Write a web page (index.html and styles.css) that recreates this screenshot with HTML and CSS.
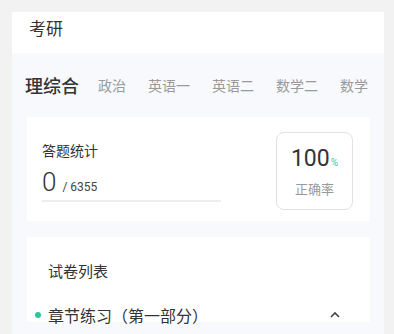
FILE: index.html
```html
<!DOCTYPE html>
<html lang="zh">
<head>
<meta charset="utf-8">
<link rel="stylesheet" href="styles.css">
</head>
<body>
<div class="panel">
  <div class="header">考研</div>
  <div class="body">
    <div class="tabs">
      <span class="tab active">理综合</span>
      <span class="tab">政治</span>
      <span class="tab">英语一</span>
      <span class="tab">英语二</span>
      <span class="tab">数学二</span>
      <span class="tab">数学</span>
    </div>
    <div class="card stats">
      <div class="stats-left">
        <div class="stats-title">答题统计</div>
        <div class="count"><span class="num">0</span><span class="total">/ 6355</span></div>
        <div class="bar"></div>
      </div>
      <div class="rate">
        <div class="rate-val">100<span class="pct">%</span></div>
        <div class="rate-label">正确率</div>
      </div>
    </div>
    <div class="card list">
      <div class="list-title">试卷列表</div>
      <div class="item">
        <span class="dot"></span>
        <span class="item-name">章节练习（第一部分）</span>
        <svg class="caret" width="12" height="8" viewBox="0 0 12 8"><path d="M2 6 L6 2 L10 6" fill="none" stroke="#444" stroke-width="1.6"/></svg>
      </div>
    </div>
  </div>
</div>
</body>
</html>
```

FILE: styles.css
```css
* { box-sizing: border-box; }
html, body { margin: 0; padding: 0; }
body {
  background: #f2f2f2;
  font-family: "Noto Sans CJK SC", "Noto Sans", sans-serif;
  width: 394px;
  height: 334px;
  overflow: hidden;
  padding: 12px 10px 0 12px;
}
.panel {
  width: 372px;
  height: 322px;
  background: #f7f9fd;
  overflow: hidden;
}
.header {
  background: #fff;
  height: 41px;
  padding-left: 17px;
  font-size: 17px;
  line-height: 32px;
  color: #333;
}
.body {
  padding: 0 14px 0 15px;
}
.tabs {
  display: flex;
  align-items: center;
  height: 64px;
  margin-left: -2px;
  white-space: nowrap;
  overflow: hidden;
}
.tab {
  font-size: 14px;
  color: #9a9a9a;
  margin-right: 22px;
}
.tab.active {
  font-size: 18px;
  color: #333;
  font-weight: 500;
  margin-right: 19px;
}
.card {
  background: #fff;
}
.stats {
  height: 104px;
  display: flex;
  align-items: flex-start;
  padding: 15px 17px 0 15px;
}
.stats-left {
  flex: 0 0 179px;
}
.stats-title {
  font-size: 14px;
  color: #333;
  line-height: 20px;
  margin-top: 8px;
}
.count {
  display: flex;
  align-items: baseline;
  margin-top: 7px;
  height: 30px;
}
.num {
  font-family: Roboto, "Noto Sans", sans-serif;
  font-size: 26px;
  font-weight: 300;
  color: #333;
  line-height: 30px;
}
.total {
  font-family: Roboto, "Noto Sans", sans-serif;
  font-size: 12px;
  color: #444;
  margin-left: 6px;
}
.bar {
  height: 2px;
  background: #eeeeee;
  margin-top: 3px;
}
.rate {
  margin-left: auto;
  width: 77px;
  height: 78px;
  border: 1px solid #e2e2e2;
  border-radius: 8px;
  text-align: center;
}
.rate-val {
  font-family: Roboto, "Noto Sans", sans-serif;
  font-size: 23px;
  color: #333;
  line-height: 28px;
  margin-top: 12px;
}
.pct {
  font-size: 10px;
  color: #3cc7a4;
  margin-left: 1px;
}
.rate-label {
  font-size: 13px;
  color: #999;
  line-height: 18px;
  margin-top: 3px;
}
.list {
  margin-top: 16px;
  height: 85px;
  padding: 23px 0 0 8px;
}
.list-title {
  font-size: 15px;
  color: #333;
  line-height: 22px;
  padding-left: 13px;
}
.item {
  display: flex;
  align-items: center;
  margin-top: 22px;
  height: 22px;
}
.dot {
  width: 6px;
  height: 6px;
  border-radius: 50%;
  background: #2ec4a0;
  margin-right: 7px;
}
.item-name {
  font-size: 16px;
  color: #333;
}
.caret {
  margin-left: auto;
  margin-right: 29px;
}
```
